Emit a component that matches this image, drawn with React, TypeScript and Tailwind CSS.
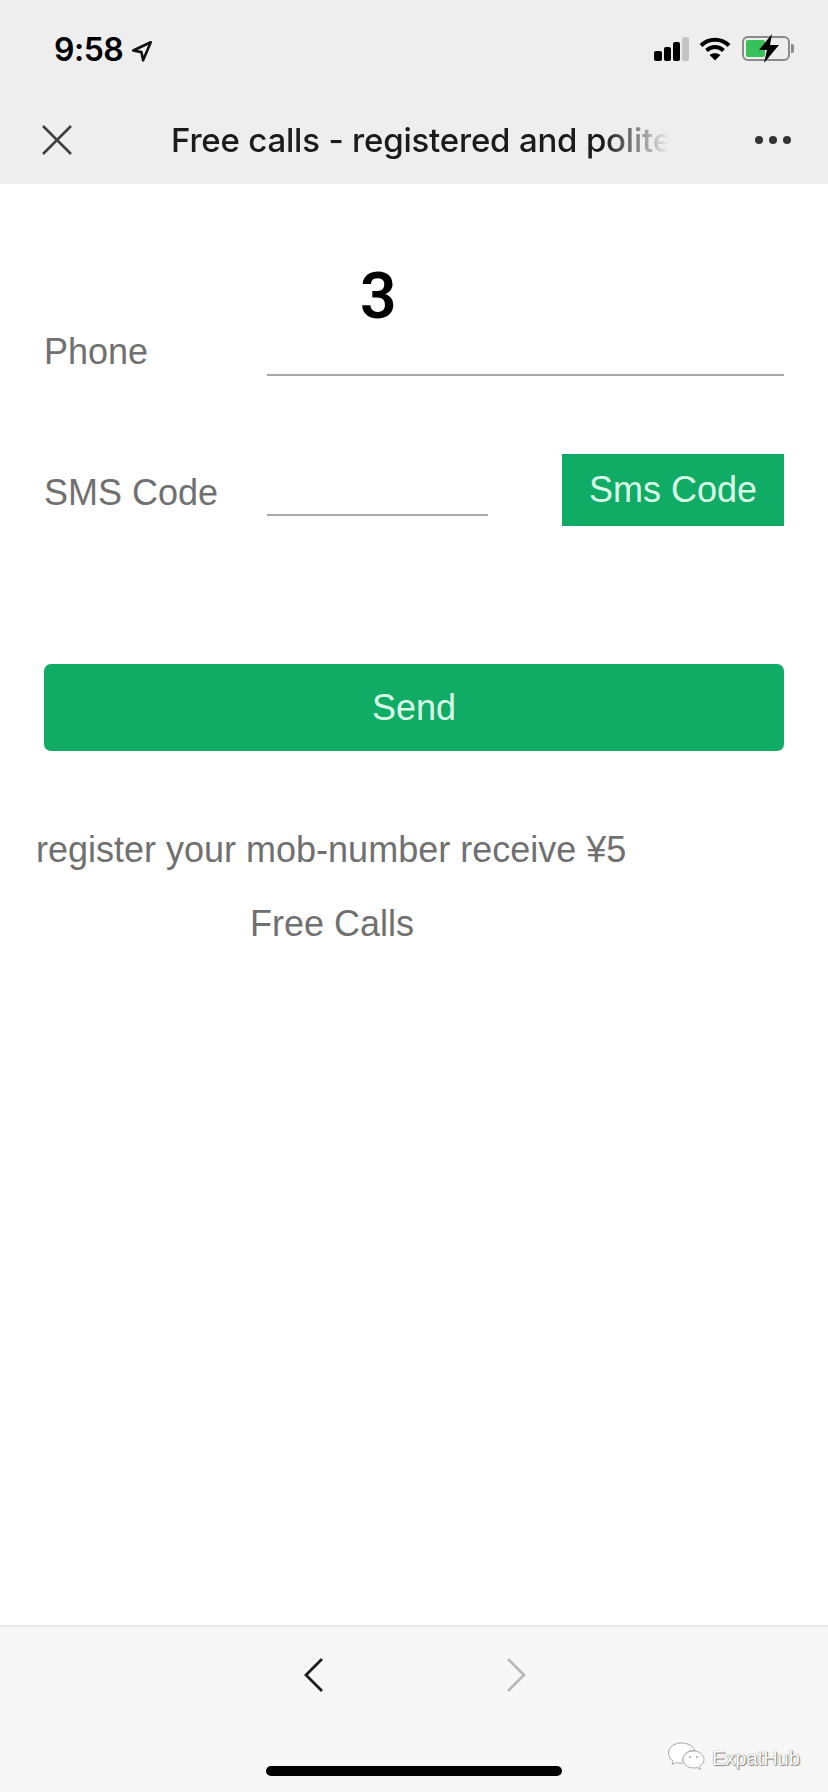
import React from 'react';

const StatusBar = () => (
  <div className="h-[92px] flex items-start justify-between pl-[54px] pr-[34px] pt-[32px]">
    <div className="flex items-center gap-[8px]">
      <span className="font-['Inter',sans-serif] font-semibold text-[32px] leading-[36px] text-black tracking-[-0.5px]">9:58</span>
      <svg width="22" height="23" viewBox="0 0 20 21" fill="none" stroke="#111" strokeWidth="2.4" strokeLinejoin="round">
        <path d="M18 3 2 10.5l7.5 1.5 1.500 7.500z" />
      </svg>
    </div>
    <div className="flex items-center gap-[10px] pt-[4px]">
      <div className="flex items-end gap-[2px] h-[25px]">
        <div className="w-[8px] h-[10px] rounded-[2px] bg-black" />
        <div className="w-[7px] h-[14px] rounded-[2px] bg-black" />
        <div className="w-[7px] h-[19px] rounded-[2px] bg-black" />
        <div className="w-[7px] h-[24px] rounded-[2px] bg-[#c4c4c4]" />
      </div>
      <svg width="32" height="25" viewBox="0 0 32 25" fill="none" stroke="#000" strokeWidth="4">
        <path d="M2 9.5C10 1.8 22 1.8 30 9.5" />
        <path d="M7.5 14.5c5-4.6 12-4.6 17 0" />
        <path d="M16 24.5 10.6 19c3.2-2.4 7.6-2.4 10.8 0z" fill="#000" stroke="none" />
      </svg>
      <div className="flex items-center ml-[1px]">
        <div className="relative w-[48px] h-[25px] rounded-[6px] border-2 border-[#8a8a8a] p-[2px]">
          <div className="w-[19px] h-full rounded-[2px] bg-[#35c25a]" />
          <svg className="absolute left-[14px] -top-[4px]" width="22" height="29" viewBox="0 0 22 29">
            <path d="M14 0 1 16h8L6 29 21 11h-9z" fill="#000" />
          </svg>
        </div>
        <div className="w-[3px] h-[9px] rounded-r-[2px] bg-[#8a8a8a] ml-[1px]" />
      </div>
    </div>
  </div>
);

const NavBar = () => (
  <div className="h-[92px] flex items-start pl-[41px] pr-[37px] pt-[32px]">
    <svg width="32" height="32" viewBox="0 0 32 32" fill="none" stroke="#3f3f3f" strokeWidth="2.6">
      <path d="M2 2l28 28M30 2 2 30" />
    </svg>
    <div className="ml-[98px] w-[498px] overflow-hidden whitespace-nowrap font-['Inter',sans-serif] text-[33px] leading-[40px] -mt-[4px] tracking-[-0.2px] text-[#1b1b1b] font-medium [mask-image:linear-gradient(to_right,black_87%,transparent_100%)]">
      Free calls - registered and polite
    </div>
    <div className="ml-auto flex items-center gap-[6px] h-[32px]">
      <div className="w-[8px] h-[8px] rounded-full bg-[#333]" />
      <div className="w-[8px] h-[8px] rounded-full bg-[#333]" />
      <div className="w-[8px] h-[8px] rounded-full bg-[#333]" />
    </div>
  </div>
);

const Form = () => (
  <div className="px-[44px] font-['Liberation_Sans',Arial,sans-serif] text-[36px] text-[#707070]">
    <div className="flex items-end pt-[76px]">
      <label className="w-[223px] leading-[42px] pb-[3px]">Phone</label>
      <div className="flex-1 h-[116px] border-b-2 border-[#a8a8a8] pl-[93px] font-['Roboto',sans-serif] font-semibold text-[64px] leading-[74px] text-black">
        3
      </div>
    </div>
    <div className="flex items-end mt-[78px]">
      <label className="w-[223px] leading-[42px] pb-[12px]">SMS Code</label>
      <div className="w-[221px] h-[60px] border-b-2 mb-[10px] border-[#a8a8a8]" />
      <button className="ml-auto w-[222px] h-[72px] bg-[#10ab64] text-[#d9ffe9] leading-[72px] text-center text-[36px] pb-[3px]">
        Sms Code
      </button>
    </div>
    <button className="block w-full h-[87px] mt-[138px] rounded-[7px] bg-[#10ab64] text-[#d9ffe9] text-[36px]">
      Send
    </button>
    <p className="-ml-[8px] mt-[78px] leading-[42px]">register your mob-number receive ¥5</p>
    <p className="ml-[206px] mt-[32px] leading-[42px]">Free Calls</p>
  </div>
);

const Toolbar = () => (
  <div className="relative h-[167px] border-t-2 border-[#e9e9e9] bg-[#f7f7f7]">
    <div className="flex items-center justify-center gap-[182px] pt-[30px] pl-[1px]">
      <svg width="20" height="36" viewBox="0 0 20 36" fill="none" stroke="#1c1c1c" strokeWidth="2.8">
        <path d="M18 2 2 18l16 16" />
      </svg>
      <svg width="20" height="36" viewBox="0 0 20 36" fill="none" stroke="#b9b9b9" strokeWidth="2.8">
        <path d="M2 2l16 16L2 34" />
      </svg>
    </div>
    <div className="absolute left-[266px] top-[139px] w-[296px] h-[10px] rounded-full bg-black" />
    <div className="absolute left-[667px] top-[115px] flex items-center gap-[7px]">
      <svg width="38" height="32" viewBox="0 0 38 32" fill="#fff" stroke="#a9a9a9" strokeWidth="1">
        <path d="M14 1C7 1 1.500 5.500 1.500 11c0 3.300 2 6 4.500 8l-1 3.500 4.500-2c1.500.4 3 .6 4.500.6 1 0 1.500 0 2.500-.2-.4-1-.6-2-.6-3 0-5.300 5-9.500 11-9.500h1C26.500 4 20.800 1 14 1z" />
        <path d="M37 17.500c0-4.700-4.700-8.500-10.500-8.500S16 12.800 16 17.500 20.700 26 26.500 26c1.200 0 2.400-.2 3.500-.5l3.500 2-1-3c2.800-1.700 4.500-4.200 4.500-7z" />
        <circle cx="23" cy="15" r="1" fill="#a9a9a9" stroke="none" />
        <circle cx="30" cy="15" r="1" fill="#a9a9a9" stroke="none" />
      </svg>
      <span className="font-['Liberation_Sans',Arial,sans-serif] text-[20px] leading-[24px] text-white [text-shadow:0_0_1px_#555,1px_1px_1px_#888]">ExpatHub</span>
    </div>
  </div>
);

export default function App() {
  return (
    <div className="w-[828px] h-[1792px] flex flex-col bg-white overflow-hidden">
      <div className="bg-[#eeeeee]">
        <StatusBar />
        <NavBar />
      </div>
      <div className="flex-1">
        <Form />
      </div>
      <Toolbar />
    </div>
  );
}
